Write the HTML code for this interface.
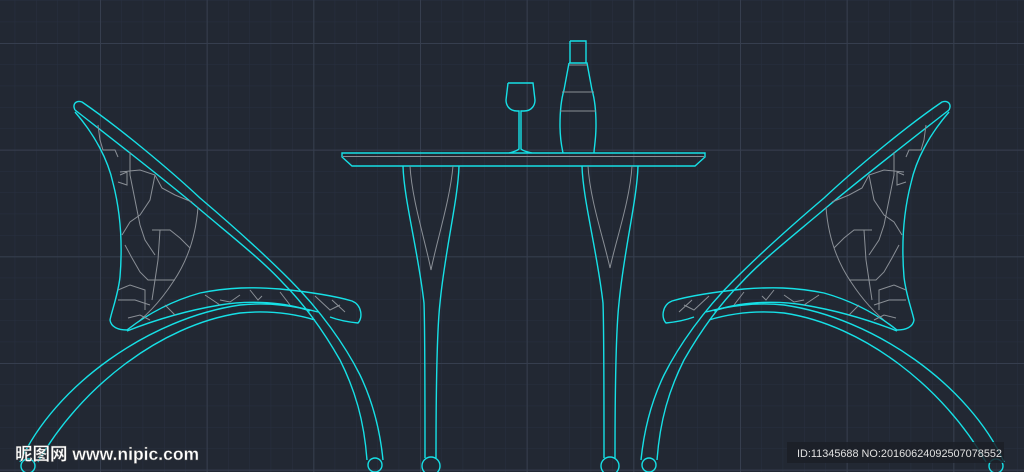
<!DOCTYPE html>
<html><head><meta charset="utf-8"><style>
html,body{margin:0;padding:0;background:#222833;width:1024px;height:472px;overflow:hidden}
svg{display:block}
.c{fill:none;stroke:#16e0e6;stroke-width:1.4}
.g{fill:none;stroke:#8a8f96;stroke-width:1}
</style></head><body>
<svg width="1024" height="472" viewBox="0 0 1024 472" xmlns="http://www.w3.org/2000/svg">
<defs>
<pattern id="mi" x="-6.67" y="43" width="21.333" height="21.333" patternUnits="userSpaceOnUse">
<path d="M0 0H21.333M0 0V21.333" stroke="#283040" stroke-width="1" fill="none"/></pattern>
<pattern id="ma" x="-6.67" y="43" width="106.667" height="106.667" patternUnits="userSpaceOnUse">
<path d="M0 0.5H106.667M0.5 0V106.667" stroke="#363e4e" stroke-width="1" fill="none"/></pattern>
<g id="chair">
<path class="c" d="M75,110 C72,104 76,100 82,102 C120,128 170,170 200,198 C240,232 270,260 290,280 C320,310 345,345 360,375 C372,400 380,430 383,460"/>
<path class="c" d="M75,110 C120,145 165,180 197,207 C230,235 262,260 283,283 C300,300 320,325 340,360 C355,390 364,420 367,460"/>
<circle class="c" cx="375" cy="465" r="7"/>
<path class="c" d="M75,112 C95,135 108,160 113,183 C120,210 123,240 120,277 C118,295 112,310 110,320 C111,327 118,330 127,330"/>
<path class="g" d="M198,207 C196,235 188,260 173,282 C160,302 145,318 127,330"/>
<path class="c" d="M127,330 C150,312 175,300 200,293 C230,287 253,287 280,289 C310,292 335,296 352,301 C362,305 363,318 358,323 C348,322 338,320 330,317"/>
<path class="c" d="M127,331 C160,318 190,310 220,305 C250,300 285,302 310,311"/>
<path class="c" d="M20,462 C55,385 150,318 240,305 C270,302 295,306 318,312"/>
<path class="c" d="M38,462 C80,388 160,325 240,313 C270,310 295,314 315,320"/>
<circle class="c" cx="28" cy="466" r="7"/>
<path class="g" d="M98,125 L100,140 L103,150 L115,150 L118,157 M130,152 L130,175 L135,200 L140,225 L145,240 L155,255 M120,175 L127,172 L127,185 L118,182 M120,172 L140,170 L155,175 L162,188 L175,195 L192,202 M155,175 L150,200 L140,215 L130,222 L122,235 M152,230 L170,230 L180,238 L190,248 M160,230 L158,260 L155,280 L152,300 M125,245 L132,258 L140,272 L148,280 L175,280 M118,290 L130,285 L145,290 L145,310 M118,300 L135,300 L150,305 M128,318 L140,315 L150,320 M205,295 L220,305 M250,290 L258,300 L262,296 M280,292 L290,305 M315,296 L330,310 L340,305 M332,300 L345,312 M240,295 L230,302 L220,300 M165,305 L175,315"/>
</g>
</defs>
<rect width="1024" height="472" fill="#222833"/>
<rect width="1024" height="472" fill="url(#mi)"/>
<rect width="1024" height="472" fill="url(#ma)"/>

<use href="#chair"/>
<use href="#chair" transform="translate(1024,0) scale(-1,1)"/>

<path class="c" d="M342,153 H705 V157 L695,166 H352 L342,157 Z"/>
<path class="g" d="M343,156.5 H704"/>
<path class="c" d="M403,166 C404,200 418,250 424,303 C425,330 425,400 425,458"/>
<path class="c" d="M459,166 C458,200 445,250 440,303 C437,330 436,400 436,458"/>
<circle class="c" cx="431" cy="466" r="9"/>
<path class="g" d="M410,166 C412,200 425,240 431,270 C437,240 450,200 453,166"/>
<path class="c" d="M582,166 C583,200 597,250 603,303 C604,330 604,400 604,458"/>
<path class="c" d="M638,166 C637,200 624,250 619,303 C616,330 615,400 615,458"/>
<circle class="c" cx="610" cy="466" r="9"/>
<path class="g" d="M588,166 C590,200 604,240 610,268 C616,240 630,200 632,166"/>
<path class="c" d="M508,83 H533 L535,100 C535,105 532,111 524,111 L521,111 V149 C523,151 527,152 532,153 M508,83 L506,100 C506,105 509,111 517,111 L519,111 V149 C517,151 513,152 509,153"/>
<path class="c" d="M570,41 H586 V63 M570,41 V63 M569,63 H587 L592,90 C595,100 596,110 596,125 C596,140 594,148 594,153 M569,63 L564,90 C561,100 560,110 560,125 C560,140 562,148 563,153"/>
<path class="g" d="M569,65 H587 M562,92 H594 M560,111 H596"/>

<text x="15" y="460" font-family="'Liberation Sans','Noto Sans CJK SC',sans-serif" font-size="17.5" font-weight="bold" fill="#fff" stroke="#555" stroke-width="0.4">昵图网 www.nipic.com</text>
<rect x="787" y="442" width="217" height="21" fill="#1b1f27" opacity="0.85"/>
<text x="797" y="457" font-family="'Liberation Sans',sans-serif" font-size="11" fill="#e0e0e0" textLength="205" lengthAdjust="spacingAndGlyphs">ID:11345688 NO:20160624092507078552</text>
</svg>
</body></html>
